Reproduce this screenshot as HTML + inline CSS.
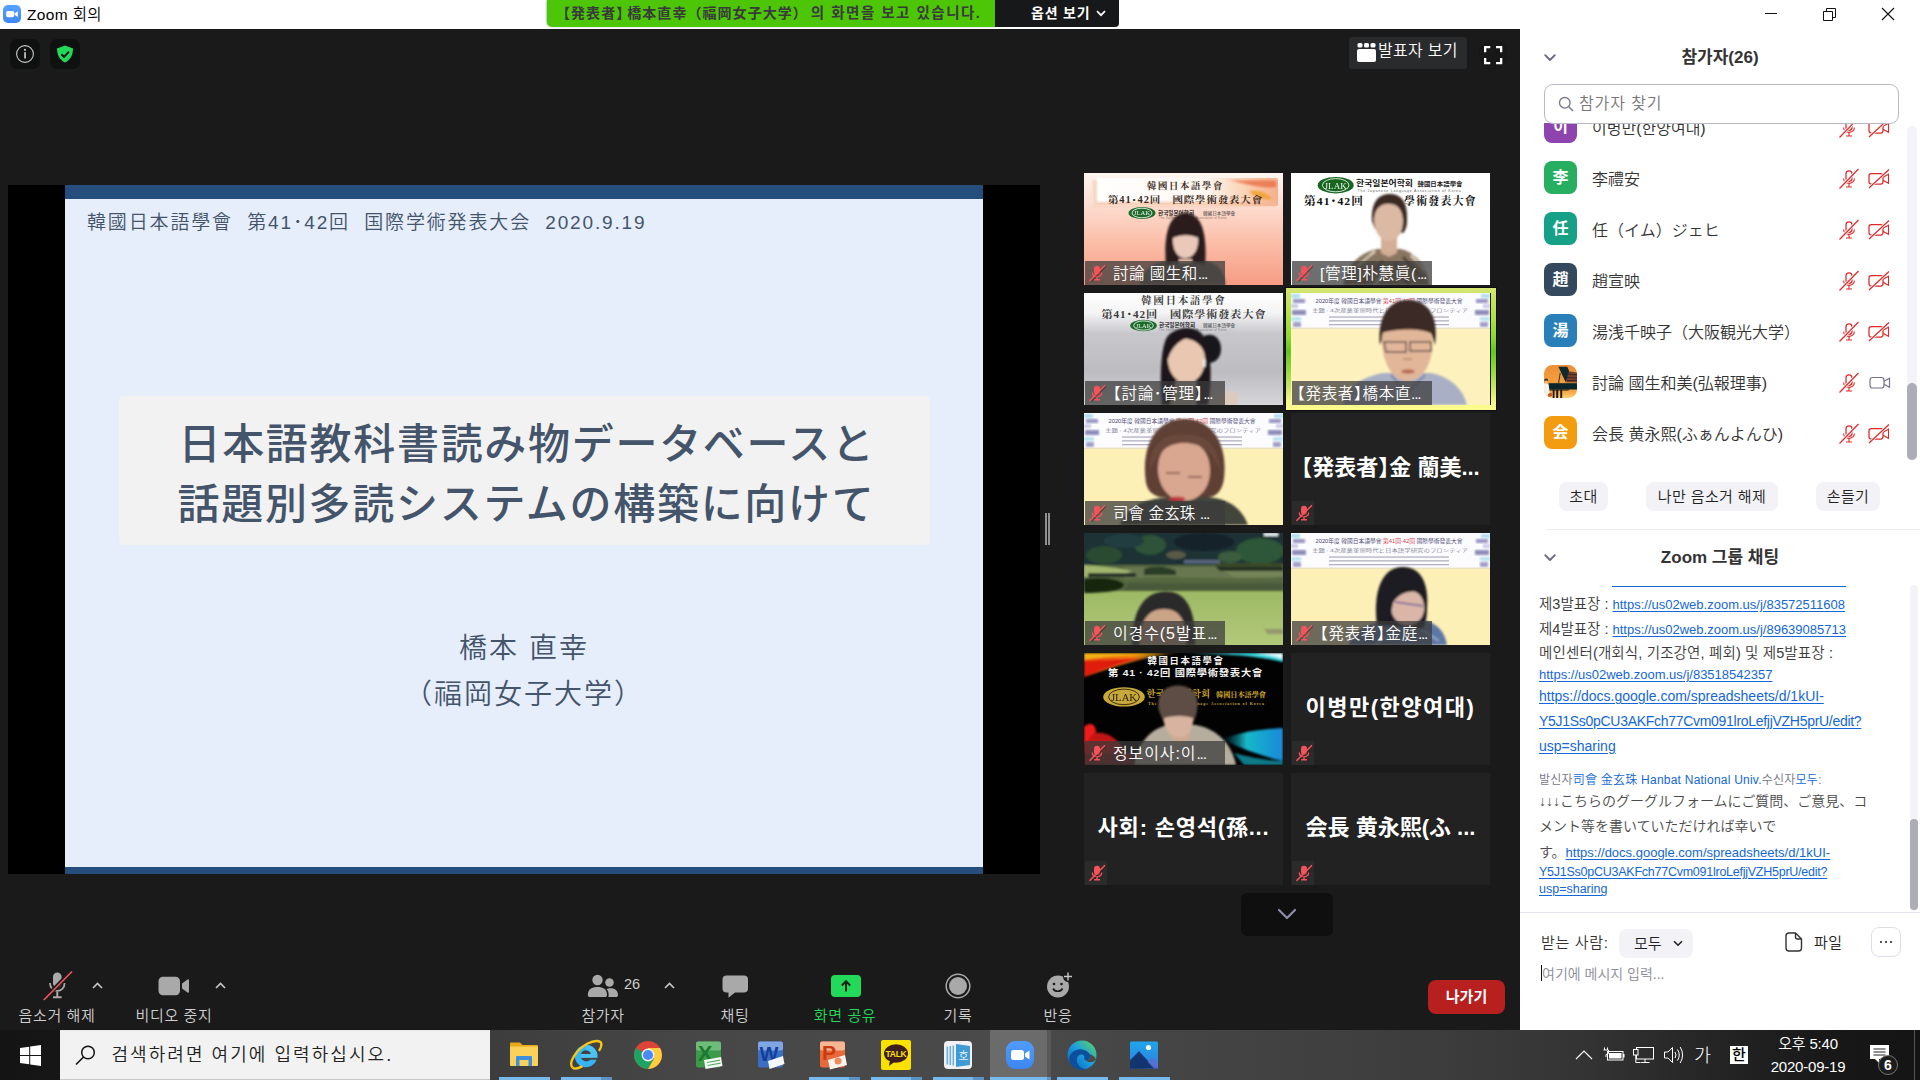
<!DOCTYPE html>
<html lang="ko">
<head>
<meta charset="utf-8">
<title>Zoom 회의</title>
<style>
*{box-sizing:border-box;margin:0;padding:0}
html,body{width:1920px;height:1080px;overflow:hidden;background:#1a1a1a}
body{font-family:"Liberation Sans","Noto Sans CJK KR","Noto Sans CJK JP",sans-serif;position:relative;color:#fff;font-weight:350}
.abs{position:absolute}
.nw{white-space:nowrap}
svg{display:block;overflow:visible}
/* title bar */
#titlebar{position:absolute;left:0;top:0;width:1920px;height:29px;background:#fff}
#titlebar .ttl{position:absolute;left:27px;top:0;height:29px;line-height:30px;font-size:15.500px;color:#000;white-space:nowrap;letter-spacing:.35px}
/* main */
#main{position:absolute;left:0;top:29px;width:1520px;height:1001px;background:#1a1a1a;overflow:hidden}
/* banner */
#banner{position:absolute;left:547px;top:0;width:448px;height:27px;background:#4cc606;border-radius:0 0 0 5px;color:#3a3a3c;font-weight:bold;font-size:14.500px;line-height:27px;white-space:nowrap;text-align:left;padding-left:16px;letter-spacing:1.500px;box-shadow:-1px 0 2px rgba(0,0,0,.25)}
#banner .bj{font-feature-settings:'halt';letter-spacing:1.050px;font-size:14px}
#banner .bk{letter-spacing:1.050px;font-size:14px;margin-right:3px;margin-left:3px}
#opt{position:absolute;left:995px;top:0;width:124px;height:27px;background:#17181a;border-radius:0 0 4px 0;color:#fff;font-weight:bold;font-size:14px;line-height:26px;white-space:nowrap}
/* slide */
#share{position:absolute;left:8px;top:185px;width:1032px;height:689px;background:#000}
#slide{position:absolute;left:57px;top:0;width:918px;height:689px;background:#e6eefc;font-family:"Liberation Sans","Noto Sans CJK JP",sans-serif;color:#44546a}
#slide .bar{position:absolute;left:0;width:918px;background:#254e7c}
/* panel */
#panel{position:absolute;left:1520px;top:29px;width:400px;height:1001px;background:#fff;color:#333;overflow:hidden}
/* taskbar */
#taskbar{position:absolute;left:0;top:1030px;width:1920px;height:50px;background:linear-gradient(90deg,#141414 0%,#1c1c1c 20%,#444 32%,#4a4a4a 50%,#444 62%,#2a2a2a 75%,#161616 90%,#141414 100%)}
</style>
</head>
<body>
<div id="titlebar">
  <svg class="abs" style="left:3px;top:5px" width="18" height="18" viewBox="0 0 18 18">
    <defs><linearGradient id="zg" x1="0" y1="0" x2="0" y2="1"><stop offset="0" stop-color="#5aa2ff"/><stop offset="1" stop-color="#3c86f2"/></linearGradient></defs>
    <rect x="0" y="0" width="18" height="18" rx="5" fill="url(#zg)"/>
    <rect x="3.2" y="6" width="8" height="6.2" rx="1.6" fill="#fff"/>
    <path d="M11.8 8.2 L14.8 6.3 V11.9 L11.8 10 Z" fill="#fff"/>
  </svg>
  <div class="ttl">Zoom 회의</div>
  <svg class="abs" style="left:1764px;top:6px" width="140" height="18" viewBox="0 0 140 18">
    <path d="M1 7.5 H13" stroke="#111" stroke-width="1" fill="none"/>
    <path d="M59.5 5.5 H68.5 V14.5 H59.5 Z M62.5 5.5 V2.5 H71.5 V11.5 H68.5" stroke="#111" stroke-width="1" fill="none"/>
    <path d="M118 2 L130 14 M130 2 L118 14" stroke="#111" stroke-width="1.1" fill="none"/>
  </svg>
</div>
<div id="main">
  <!-- info + shield buttons -->
  <div class="abs" style="left:10px;top:10px;width:30px;height:30px;border-radius:7px;background:#0f1010"></div>
  <svg class="abs" style="left:10px;top:10px" width="30" height="30" viewBox="0 0 30 30">
    <circle cx="15" cy="15" r="8.4" fill="none" stroke="#c8c8c8" stroke-width="1.1"/>
    <rect x="14.2" y="13.2" width="1.7" height="6.3" fill="#c8c8c8"/>
    <circle cx="15" cy="10.8" r="1.1" fill="#c8c8c8"/>
  </svg>
  <div class="abs" style="left:50px;top:10px;width:30px;height:30px;border-radius:7px;background:#0f1010"></div>
  <svg class="abs" style="left:50px;top:10px" width="30" height="30" viewBox="0 0 30 30">
    <path d="M15 6.4 L23 9.6 C23 16 20.5 21 15 23.6 C9.500 21 7 16 7 9.6 Z" fill="#23d959"/>
    <path d="M11.400 15.3 L14 17.800 L19 12.600" fill="none" stroke="#0f1010" stroke-width="1.900"/>
  </svg>

  <!-- speaker view button -->
  <div class="abs" style="left:1349px;top:8px;width:118px;height:32px;border-radius:3px;background:#2a2b2d"></div>
  <svg class="abs" style="left:1357px;top:14px" width="19" height="19" viewBox="0 0 19 19">
    <rect x="0" y="6" width="19" height="13" rx="2" fill="#fff"/>
    <rect x="0.5" y="0" width="5" height="4.6" rx="1.6" fill="#fff"/>
    <rect x="7" y="0" width="5" height="4.6" rx="1.6" fill="#fff"/>
    <rect x="13.5" y="0" width="5" height="4.6" rx="1.6" fill="#fff"/>
  </svg>
  <div class="abs nw" style="left:1378px;top:10px;font-size:16px;line-height:24px;color:#fff;letter-spacing:0.3px">발표자 보기</div>
  <div class="abs" style="left:1479px;top:11px;width:29px;height:29px;border-radius:15px;background:#171717"></div>
  <svg class="abs" style="left:1484px;top:16.500px" width="18.300" height="18.300" viewBox="0 0 19 19">
    <path d="M1.2 6.5 V1.200 H6.5 M12.500 1.200 H17.800 V6.5 M17.800 12.500 V17.800 H12.500 M6.5 17.800 H1.200 V12.500" fill="none" stroke="#fff" stroke-width="2.400"/>
  </svg>

  <!-- shared screen -->
  <div id="share" style="top:156px">
    <div id="slide">
      <div class="bar" style="top:0;height:14px"></div>
      <div class="bar" style="top:682px;height:7px"></div>
      <div class="abs nw" style="left:22px;top:23px;font-size:19px;line-height:30px;letter-spacing:1.850px;color:#44546a">韓國日本語學會&nbsp; 第41･42回&nbsp; 国際学術発表大会&nbsp; 2020.9.19</div>
      <div class="abs" style="left:54px;top:211px;width:811px;height:149px;border-radius:5px;background:#f2f2f2"></div>
      <div class="abs nw" style="left:56px;top:229.500px;width:811px;text-align:center;font-size:42px;line-height:60px;letter-spacing:1.700px;font-weight:500;color:#44546a;text-indent:1px">日本語教科書読み物データベースと</div>
      <div class="abs nw" style="left:56px;top:289.500px;width:811px;text-align:center;font-size:42px;line-height:60px;letter-spacing:1.700px;font-weight:500;color:#44546a">話題別多読システムの構築に向けて</div>
      <div class="abs nw" style="left:0;top:442px;width:918px;text-align:center;font-size:28px;line-height:44px;letter-spacing:2px;color:#44546a">橋本 直幸</div>
      <div class="abs nw" style="left:0;top:487.500px;width:918px;text-align:center;font-size:28px;line-height:44px;letter-spacing:2px;color:#44546a">（福岡女子大学）</div>
    </div>
  </div>
  <!-- splitter handle -->
  <div class="abs" style="left:1045px;top:484px;width:2px;height:32px;background:#8f8f8f"></div>
  <div class="abs" style="left:1048px;top:484px;width:2px;height:32px;background:#8f8f8f"></div>
<style>
.tile{position:absolute;width:199px;height:112px;overflow:hidden;background:#222}
.tile>svg{position:absolute;left:0;top:0}
.lb{position:absolute;left:1px;top:88px;width:140px;height:24px;background:rgba(59,59,59,.74)}
.lt{position:absolute;top:88px;height:24px;line-height:25px;font-size:15.500px;color:#fff;white-space:nowrap;font-feature-settings:'halt'}
.dt{letter-spacing:-1.200px;font-size:15.500px}
.nv{position:absolute;left:0;top:0;width:199px;height:112px;line-height:110px;text-align:center;font-size:22px;font-weight:bold;color:#fff;white-space:nowrap;font-feature-settings:'halt'}
.nm{position:absolute;left:1px;top:88px;width:22px;height:24px;background:#2b2b2b}
</style>
<svg width="0" height="0" style="position:absolute"><defs><filter id="sf" x="-10%" y="-10%" width="120%" height="120%"><feGaussianBlur stdDeviation="0.8"/></filter></defs></svg>
<div class="abs" style="left:1286px;top:259px;width:210px;height:122px;box-shadow:0 0 0 1px #0c0c12;background:linear-gradient(180deg,#d6e674 0%,#cde466 5%,#b9e24a 20%,#8fd92f 40%,#62c61a 52%,#96db3a 68%,#d4e96c 84%,#f6f886 93%,#fcfc90 100%)"></div>
<div class="abs" style="left:1490px;top:264px;width:1px;height:112px;background:#1c1c20"></div>
<div class="tile" style="left:1084px;top:144px"><svg width="199" height="112" viewBox="0 0 199 112"><defs><linearGradient id="g1" x1="0" y1="0" x2="0" y2="1"><stop offset="0" stop-color="#fff6f2"/><stop offset="0.3" stop-color="#fddccf"/><stop offset="0.65" stop-color="#fbbba5"/><stop offset="1" stop-color="#f79c83"/></linearGradient><linearGradient id="g1b" x1="0" y1="0" x2="1" y2="0"><stop offset="0" stop-color="#ffffff"/><stop offset="0.6" stop-color="#fff8f2"/><stop offset="0.82" stop-color="#fbd3b6"/><stop offset="1" stop-color="#f4b08c"/></linearGradient></defs><rect width="199" height="112" fill="url(#g1)"/><rect x="8" y="5" width="186" height="28" rx="2" fill="url(#g1b)"/><g filter="url(#sf)"><path d="M12 29 H192 V33 H12Z" fill="#f4b896" opacity="0.7"/><path d="M140 6 C155 9 170 6 192 8 V14 C175 16 160 10 140 6Z" fill="#e8623a" opacity="0.7"/><path d="M165 18 C175 16 184 20 188 26 C178 28 170 24 165 18Z" fill="#f0a030" opacity="0.850"/><rect x="8" y="6" width="5" height="30" rx="2" fill="#f6d8c4"/></g><text textLength="77" lengthAdjust="spacingAndGlyphs" x="101.500" y="16.200" text-anchor="middle" font-size="9.300" font-weight="bold" letter-spacing="1.700" font-family="Liberation Serif,Noto Serif CJK KR,Noto Serif CJK SC,serif" fill="#3b2a22">韓國日本語學會</text><text textLength="155" lengthAdjust="spacingAndGlyphs" x="101.500" y="30.300" text-anchor="middle" font-size="9.600" font-weight="bold" letter-spacing="0.800" font-family="Liberation Serif,Noto Serif CJK KR,Noto Serif CJK SC,serif" fill="#3b2a22">第41･42回　國際學術發表大會</text><ellipse cx="58" cy="40" rx="13.5" ry="6" fill="#1e6a2a"/><ellipse cx="58" cy="40" rx="10.0" ry="4.8" fill="none" stroke="#fff" stroke-width="0.9" opacity="0.9"/><text x="58" y="42.4" text-anchor="middle" font-size="6.6" font-family="Liberation Serif,Noto Serif CJK KR,Noto Serif CJK SC,serif" fill="#fff" opacity="0.95">JLAK</text><text x="74" y="41.500" font-size="5.600" font-weight="bold" font-family="Liberation Sans,Noto Sans CJK KR,sans-serif" fill="#222">한국일본어학회</text><text x="119" y="41.500" font-size="4.600" font-family="Liberation Sans,Noto Sans CJK KR,sans-serif" fill="#333">韓國日本語學會</text><text x="75" y="45.800" font-size="2.600" letter-spacing="0.350" font-family="Liberation Sans,Noto Sans CJK KR,sans-serif" fill="#8a6a60">The Japanese Language Association of Korea</text><g filter="url(#sf)"><path d="M56 112 C58 96 70 89 84 88 H120 C132 89 140 96 142 112Z" fill="#6f665a"/><path d="M82 92 C80 70 82 40 101.500 40 C121 40 123 70 121 92 L112 90 H90Z" fill="#2a1c1c"/><path d="M89 64 C92 60 110 60 114 64 C115 76 110 85 101 85 C93 85 88 76 89 64Z" fill="#ebc9ba"/><path d="M88 66 C92 56 110 56 115 66 C110 61 94 61 88 66Z" fill="#2a1c1c"/><path d="M95 86 H108 V90 H95Z" fill="#e2bba9"/></g></svg><div class="lb"></div><svg class="abs" style="left:4px;top:91px" width="18" height="18" viewBox="0 0 18 18"><rect x="6" y="1.800" width="6" height="9.200" rx="3" fill="#f5535a"/><path d="M4.300 8.600 C4.300 14 13.700 14 13.700 8.600" fill="none" stroke="#f5535a" stroke-width="1.300"/><path d="M9 12.800 V15.300 M6 15.700 H12" stroke="#f5535a" stroke-width="1.500" fill="none"/><path d="M17.800 2.200 L3.500 17.600" stroke="#2a2424" stroke-width="1.300" fill="none" opacity="0.450"/><path d="M17 1.200 L1.500 16.800" stroke="#f5535a" stroke-width="1.500" fill="none"/></svg><div class="lt" style="left:29px;letter-spacing:0.5px">討論 國生和<span class="dt">...</span></div></div>
<div class="tile" style="left:1291px;top:144px"><svg width="199" height="112" viewBox="0 0 199 112"><rect width="199" height="112" fill="#fff"/><ellipse cx="44.7" cy="12.2" rx="18" ry="8.3" fill="#17651f"/><ellipse cx="44.7" cy="12.2" rx="13.3" ry="6.6" fill="none" stroke="#fff" stroke-width="0.9" opacity="0.9"/><text x="44.7" y="15.5" text-anchor="middle" font-size="9.1" font-family="Liberation Serif,Noto Serif CJK KR,Noto Serif CJK SC,serif" fill="#fff" opacity="0.95">JLAK</text><text textLength="57" lengthAdjust="spacingAndGlyphs" x="65" y="13" font-size="7.900" font-weight="bold" font-family="Liberation Sans,Noto Sans CJK KR,sans-serif" fill="#111">한국일본어학회</text><text textLength="45" lengthAdjust="spacingAndGlyphs" x="126.500" y="12.500" font-size="6.200" font-weight="bold" font-family="Liberation Sans,Noto Sans CJK KR,sans-serif" fill="#222">韓國日本語學會</text><text textLength="104" lengthAdjust="spacingAndGlyphs" x="66.500" y="19.300" font-size="3.600" letter-spacing="0.720" font-family="Liberation Sans,Noto Sans CJK KR,sans-serif" fill="#666">The Japanese Language Association of Korea</text><text textLength="60" lengthAdjust="spacingAndGlyphs" x="13" y="32.300" font-size="11" font-weight="bold" letter-spacing="1" font-family="Liberation Serif,Noto Serif CJK KR,Noto Serif CJK SC,serif" fill="#111">第41･42回</text><text textLength="73" lengthAdjust="spacingAndGlyphs" x="113" y="32.300" font-size="11" font-weight="bold" letter-spacing="1.300" font-family="Liberation Serif,Noto Serif CJK KR,Noto Serif CJK SC,serif" fill="#111">學術發表大會</text><g filter="url(#sf)"><path d="M52 112 C56 92 68 80 86 76 H110 C126 80 136 94 138 112Z" fill="#8a7560"/><path d="M60 100 L80 82 M72 110 L92 88 M112 84 L130 104 M104 90 L118 112" stroke="#2e2622" stroke-width="3.200" opacity="0.6"/><path d="M66 94 L84 78 M120 82 L134 98 M84 112 L96 96" stroke="#efe4cc" stroke-width="3" opacity="0.750"/><path d="M90 60 H106 V80 L98 84 L90 80Z" fill="#d3ad96"/><path d="M81 48 C80 28 88 21 99 21 C111 21 117 30 116 48 C116 54 114 58 112 60 L84 56Z" fill="#3b2a24"/><path d="M83 46 C84 34 92 30 99 31 C107 31 112 38 112 48 C112 60 106 68 98 68 C90 68 83 60 83 46Z" fill="#dcb9a3"/></g></svg><div class="lb"></div><svg class="abs" style="left:4px;top:91px" width="18" height="18" viewBox="0 0 18 18"><rect x="6" y="1.800" width="6" height="9.200" rx="3" fill="#f5535a"/><path d="M4.300 8.600 C4.300 14 13.700 14 13.700 8.600" fill="none" stroke="#f5535a" stroke-width="1.300"/><path d="M9 12.800 V15.300 M6 15.700 H12" stroke="#f5535a" stroke-width="1.500" fill="none"/><path d="M17.800 2.200 L3.500 17.600" stroke="#2a2424" stroke-width="1.300" fill="none" opacity="0.450"/><path d="M17 1.200 L1.500 16.800" stroke="#f5535a" stroke-width="1.500" fill="none"/></svg><div class="lt" style="left:29px;letter-spacing:0.7px">[管理]朴慧眞(<span class="dt">...</span></div></div>
<div class="tile" style="left:1084px;top:264px"><svg width="199" height="112" viewBox="0 0 199 112"><defs><linearGradient id="g3" x1="0" y1="0" x2="0" y2="1"><stop offset="0" stop-color="#ffffff"/><stop offset="0.18" stop-color="#f4f4f5"/><stop offset="0.36" stop-color="#c8c7cc"/><stop offset="0.7" stop-color="#bdbcc1"/><stop offset="1" stop-color="#d6d5d8"/></linearGradient></defs><rect width="199" height="112" fill="url(#g3)"/><text textLength="85.5" lengthAdjust="spacingAndGlyphs" x="100" y="11.300" text-anchor="middle" font-size="10.200" font-weight="bold" letter-spacing="2" font-family="Liberation Serif,Noto Serif CJK KR,Noto Serif CJK SC,serif" fill="#3a3a3a">韓國日本語學會</text><text textLength="165" lengthAdjust="spacingAndGlyphs" x="100" y="25.200" text-anchor="middle" font-size="10.200" font-weight="bold" letter-spacing="0.850" font-family="Liberation Serif,Noto Serif CJK KR,Noto Serif CJK SC,serif" fill="#3a3a3a">第41･42回　國際學術發表大會</text><ellipse cx="59.5" cy="32.5" rx="13.3" ry="5.8" fill="#1b6b28"/><ellipse cx="59.5" cy="32.5" rx="9.8" ry="4.6" fill="none" stroke="#fff" stroke-width="0.9" opacity="0.9"/><text x="59.5" y="34.8" text-anchor="middle" font-size="6.4" font-family="Liberation Serif,Noto Serif CJK KR,Noto Serif CJK SC,serif" fill="#fff" opacity="0.95">JLAK</text><text x="75" y="34" font-size="5.600" font-weight="bold" font-family="Liberation Sans,Noto Sans CJK KR,sans-serif" fill="#222">한국일본어학회</text><text x="119" y="34" font-size="4.600" font-family="Liberation Sans,Noto Sans CJK KR,sans-serif" fill="#333">韓國日本語學會</text><text x="75" y="38.300" font-size="2.600" letter-spacing="0.350" font-family="Liberation Sans,Noto Sans CJK KR,sans-serif" fill="#777">The Japanese Language Association of Korea</text><g filter="url(#sf)"><path d="M118 44 C128 38 137 44 137 56 C137 64 132 70 124 70Z" fill="#17161a"/><path d="M128 112 C130 100 140 96 154 100 V112Z" fill="#dccbbd"/><path d="M78 112 C76 90 76 60 82 46 C88 34 112 30 120 44 C128 58 128 90 124 112Z" fill="#1b181a"/><path d="M84 60 C86 48 96 44 104 46 C114 48 122 56 121 68 C120 82 112 90 102 90 C92 90 82 78 84 60Z" fill="#e9c7b0"/><path d="M82 62 C84 46 96 40 106 44 C98 46 88 52 84 66Z" fill="#1b181a"/><path d="M92 88 H112 V112 H86Z" fill="#c9b9aa"/><rect x="119" y="66" width="2.500" height="8" rx="1.200" fill="#f4f4f4"/></g></svg><div class="lb"></div><svg class="abs" style="left:4px;top:91px" width="18" height="18" viewBox="0 0 18 18"><rect x="6" y="1.800" width="6" height="9.200" rx="3" fill="#f5535a"/><path d="M4.300 8.600 C4.300 14 13.700 14 13.700 8.600" fill="none" stroke="#f5535a" stroke-width="1.300"/><path d="M9 12.800 V15.300 M6 15.700 H12" stroke="#f5535a" stroke-width="1.500" fill="none"/><path d="M17.800 2.200 L3.500 17.600" stroke="#2a2424" stroke-width="1.300" fill="none" opacity="0.450"/><path d="M17 1.200 L1.500 16.800" stroke="#f5535a" stroke-width="1.500" fill="none"/></svg><div class="lt" style="left:29px;letter-spacing:0.7px">【討論･管理】<span class="dt">...</span></div></div>
<div class="tile" style="left:1291px;top:264px"><svg width="199" height="112" viewBox="0 0 199 112"><rect width="199" height="112" fill="#fdf2bd"/><rect x="0" y="0" width="199" height="35" fill="#fcfcff"/><rect x="0" y="1" width="9" height="4" fill="#8fd0e8" opacity="0.7" filter="url(#sf)"/><rect x="2" y="6" width="12" height="4" fill="#6d6aa8" opacity="0.7" filter="url(#sf)"/><rect x="0" y="11" width="7" height="4" fill="#b7b4dc" opacity="0.7" filter="url(#sf)"/><rect x="1" y="17" width="14" height="5" fill="#5f5c9c" opacity="0.7" filter="url(#sf)"/><rect x="0" y="24" width="10" height="4" fill="#9ad7ea" opacity="0.7" filter="url(#sf)"/><rect x="2" y="29" width="8" height="5" fill="#7a77b3" opacity="0.7" filter="url(#sf)"/><rect x="190" y="1" width="9" height="4" fill="#8fd0e8" opacity="0.7" filter="url(#sf)"/><rect x="185" y="6" width="12" height="4" fill="#6d6aa8" opacity="0.7" filter="url(#sf)"/><rect x="192" y="11" width="7" height="4" fill="#b7b4dc" opacity="0.7" filter="url(#sf)"/><rect x="184" y="17" width="14" height="5" fill="#5f5c9c" opacity="0.7" filter="url(#sf)"/><rect x="189" y="24" width="10" height="4" fill="#9ad7ea" opacity="0.7" filter="url(#sf)"/><rect x="189" y="29" width="8" height="5" fill="#7a77b3" opacity="0.7" filter="url(#sf)"/><text x="24.500" y="10.300" textLength="147" lengthAdjust="spacingAndGlyphs" font-size="6.200" font-family="Liberation Sans,Noto Sans CJK KR,sans-serif" fill="#4a4670">2020年度 韓國日本語學會 <tspan fill="#d23a4a">第41回·42回</tspan> 國際學術發表大會</text><text x="21" y="18.600" textLength="156" lengthAdjust="spacingAndGlyphs" font-size="4.300" font-family="Liberation Sans,Noto Sans CJK KR,sans-serif" fill="#7a798e">主題 : 4次産業革命時代と日本語学研究のフロンティア</text><rect x="38" y="23.4" width="120" height="1.300" fill="#9a99ac" opacity="0.750"/><rect x="38" y="27.2" width="120" height="1.300" fill="#9a99ac" opacity="0.750"/><rect x="38" y="31" width="120" height="1.300" fill="#9a99ac" opacity="0.750"/><rect x="0" y="34.500" width="199" height="1.500" fill="#e8e0c8" opacity="0.9"/><g filter="url(#sf)"><path d="M52 112 C56 94 70 84 92 80 H140 C160 84 172 96 176 112Z" fill="#a9b0c6"/><path d="M100 82 L116 100 L134 82" fill="none" stroke="#8088a4" stroke-width="2"/><path d="M89 52 C86 24 98 6 118 7 C138 8 148 24 144 52 L140 40 H94Z" fill="#3a2c26"/><path d="M91 44 C92 34 100 30 116 30 C132 30 140 36 141 46 C143 66 134 88 116 88 C100 88 90 66 91 44Z" fill="#e2b699"/><path d="M90 40 C96 28 110 30 118 26 C128 28 138 30 143 42 C132 34 104 36 90 40Z" fill="#3a2c26"/><path d="M93 49 H115 V59 H95Z M119 49 H140 V58 H119Z" fill="none" stroke="#4a4040" stroke-width="1.400" opacity="0.850"/><ellipse cx="117" cy="78.500" rx="7" ry="2.200" fill="#b0604e" opacity="0.850"/><path d="M112 66 H121" stroke="#b88a70" stroke-width="1.500"/></g></svg><div class="lb"></div><div class="lt" style="left:6px;letter-spacing:0.7px">【発表者】橋本直<span class="dt">...</span></div></div>
<div class="tile" style="left:1084px;top:384px"><svg width="199" height="112" viewBox="0 0 199 112"><rect width="199" height="112" fill="#fdf0b6"/><rect x="0" y="0" width="199" height="35" fill="#fcfcff"/><rect x="0" y="1" width="9" height="4" fill="#8fd0e8" opacity="0.7" filter="url(#sf)"/><rect x="2" y="6" width="12" height="4" fill="#6d6aa8" opacity="0.7" filter="url(#sf)"/><rect x="0" y="11" width="7" height="4" fill="#b7b4dc" opacity="0.7" filter="url(#sf)"/><rect x="1" y="17" width="14" height="5" fill="#5f5c9c" opacity="0.7" filter="url(#sf)"/><rect x="0" y="24" width="10" height="4" fill="#9ad7ea" opacity="0.7" filter="url(#sf)"/><rect x="2" y="29" width="8" height="5" fill="#7a77b3" opacity="0.7" filter="url(#sf)"/><rect x="190" y="1" width="9" height="4" fill="#8fd0e8" opacity="0.7" filter="url(#sf)"/><rect x="185" y="6" width="12" height="4" fill="#6d6aa8" opacity="0.7" filter="url(#sf)"/><rect x="192" y="11" width="7" height="4" fill="#b7b4dc" opacity="0.7" filter="url(#sf)"/><rect x="184" y="17" width="14" height="5" fill="#5f5c9c" opacity="0.7" filter="url(#sf)"/><rect x="189" y="24" width="10" height="4" fill="#9ad7ea" opacity="0.7" filter="url(#sf)"/><rect x="189" y="29" width="8" height="5" fill="#7a77b3" opacity="0.7" filter="url(#sf)"/><text x="24.500" y="10.300" textLength="147" lengthAdjust="spacingAndGlyphs" font-size="6.200" font-family="Liberation Sans,Noto Sans CJK KR,sans-serif" fill="#4a4670">2020年度 韓國日本語學會 <tspan fill="#d23a4a">第41回·42回</tspan> 國際學術發表大會</text><text x="21" y="18.600" textLength="156" lengthAdjust="spacingAndGlyphs" font-size="4.300" font-family="Liberation Sans,Noto Sans CJK KR,sans-serif" fill="#7a798e">主題 : 4次産業革命時代と日本語学研究のフロンティア</text><rect x="38" y="23.4" width="120" height="1.300" fill="#9a99ac" opacity="0.750"/><rect x="38" y="27.2" width="120" height="1.300" fill="#9a99ac" opacity="0.750"/><rect x="38" y="31" width="120" height="1.300" fill="#9a99ac" opacity="0.750"/><rect x="0" y="34.500" width="199" height="1.500" fill="#e8e0c8" opacity="0.9"/><g filter="url(#sf)"><path d="M36 112 C42 94 60 86 84 84 H124 C146 86 158 96 164 112Z" fill="#43453a"/><path d="M62 70 C56 30 74 6 100 6 C128 6 144 30 140 66 C138 78 132 84 124 84 L76 84 C68 82 64 78 62 70Z" fill="#5f4036"/><path d="M74 56 C74 38 84 28 100 28 C116 28 126 40 126 58 C126 76 114 88 100 88 C86 88 74 74 74 56Z" fill="#d9a68f"/><path d="M66 58 C64 30 84 18 102 22 C120 20 136 34 136 58 C130 40 118 30 100 30 C84 30 72 40 66 58Z" fill="#6a483c"/><ellipse cx="93" cy="86" rx="8.500" ry="2.600" fill="#c0303a" opacity="0.9"/><path d="M82 60 H96 M104 64 H118" stroke="#5a3a30" stroke-width="1.300" opacity="0.7"/></g></svg><div class="lb"></div><svg class="abs" style="left:4px;top:91px" width="18" height="18" viewBox="0 0 18 18"><rect x="6" y="1.800" width="6" height="9.200" rx="3" fill="#f5535a"/><path d="M4.300 8.600 C4.300 14 13.700 14 13.700 8.600" fill="none" stroke="#f5535a" stroke-width="1.300"/><path d="M9 12.800 V15.300 M6 15.700 H12" stroke="#f5535a" stroke-width="1.500" fill="none"/><path d="M17.800 2.200 L3.500 17.600" stroke="#2a2424" stroke-width="1.300" fill="none" opacity="0.450"/><path d="M17 1.200 L1.500 16.800" stroke="#f5535a" stroke-width="1.500" fill="none"/></svg><div class="lt" style="left:29px;letter-spacing:0.1px">司會 金玄珠 <span class="dt">...</span></div></div>
<div class="tile" style="left:1291px;top:384px"><div class="nv">【発表者】金 蘭美...</div><div class="nm"></div><svg class="abs" style="left:4px;top:91px" width="18" height="18" viewBox="0 0 18 18"><rect x="6" y="1.800" width="6" height="9.200" rx="3" fill="#f5535a"/><path d="M4.300 8.600 C4.300 14 13.700 14 13.700 8.600" fill="none" stroke="#f5535a" stroke-width="1.300"/><path d="M9 12.800 V15.300 M6 15.700 H12" stroke="#f5535a" stroke-width="1.500" fill="none"/><path d="M17.800 2.200 L3.500 17.600" stroke="#2a2424" stroke-width="1.300" fill="none" opacity="0.450"/><path d="M17 1.200 L1.500 16.800" stroke="#f5535a" stroke-width="1.500" fill="none"/></svg></div>
<div class="tile" style="left:1084px;top:504px"><svg width="199" height="112" viewBox="0 0 199 112"><defs><linearGradient id="g7" x1="0" y1="0" x2="0" y2="1"><stop offset="0.5" stop-color="#9db964"/><stop offset="1" stop-color="#b2c87a"/></linearGradient></defs><rect width="199" height="112" fill="url(#g7)"/><g filter="url(#sf)"><rect x="-3" y="-3" width="205" height="37" fill="#1b3036"/><ellipse cx="20" cy="22" rx="18" ry="9" fill="#2c4c30"/><ellipse cx="66" cy="12" rx="16" ry="10" fill="#2f5238"/><ellipse cx="40" cy="8" rx="20" ry="7" fill="#223c40"/><ellipse cx="176" cy="18" rx="24" ry="13" fill="#2f5637"/><ellipse cx="120" cy="9" rx="30" ry="9" fill="#13242c"/><ellipse cx="146" cy="24" rx="12" ry="6" fill="#3a5c3c"/><ellipse cx="92" cy="22" rx="10" ry="4" fill="#5a5a48"/><rect x="180" y="0" width="14" height="3" fill="#e8f0f4"/><rect x="-3" y="32" width="205" height="26" fill="#55673f"/><path d="M40 34 H199 V44 C150 48 100 42 40 46Z" fill="#6c7c54" opacity="0.8"/><path d="M44 50 H199 V58 H40Z" fill="#47583a" opacity="0.850"/><path d="M140 38 H199 V44 H150Z" fill="#7d8c5e" opacity="0.7"/><path d="M0 32 C15 33 35 35 48 38 C40 42 20 44 0 44Z" fill="#a2b66e"/><path d="M0 46 C20 43 40 47 40 52 C40 58 20 60 0 60Z" fill="#182810"/><path d="M4 40 H52 V44 H4Z" fill="#26322a"/><path d="M60 36 C70 32 86 34 92 38 V42 H60Z" fill="#2a3c26"/><rect x="132" y="30" width="66" height="5" fill="#3a4a2c"/><rect x="100" y="27" width="36" height="3.500" fill="#5a6880"/><path d="M132 34 H199 V38 H136Z" fill="#222e20"/></g><g filter="url(#sf)"><path d="M48 112 C48 74 62 58.500 82 58.500 C102 58.500 112 76 111 112Z" fill="#2c2c2a"/><path d="M56 112 C55 88 64 76 80 76 C96 76 103 88 102 112Z" fill="#caa487"/><path d="M180 96 H199 V101 H184Z" fill="#8a8468" opacity="0.7"/></g></svg><div class="lb"></div><svg class="abs" style="left:4px;top:91px" width="18" height="18" viewBox="0 0 18 18"><rect x="6" y="1.800" width="6" height="9.200" rx="3" fill="#f5535a"/><path d="M4.300 8.600 C4.300 14 13.700 14 13.700 8.600" fill="none" stroke="#f5535a" stroke-width="1.300"/><path d="M9 12.800 V15.300 M6 15.700 H12" stroke="#f5535a" stroke-width="1.500" fill="none"/><path d="M17.800 2.200 L3.500 17.600" stroke="#2a2424" stroke-width="1.300" fill="none" opacity="0.450"/><path d="M17 1.200 L1.500 16.800" stroke="#f5535a" stroke-width="1.500" fill="none"/></svg><div class="lt" style="left:29px;letter-spacing:0.9px;font-size:16px">이경수(5발표<span class="dt">...</span></div></div>
<div class="tile" style="left:1291px;top:504px"><svg width="199" height="112" viewBox="0 0 199 112"><rect width="199" height="112" fill="#fdf0b6"/><rect x="0" y="0" width="199" height="35" fill="#fcfcff"/><rect x="0" y="1" width="9" height="4" fill="#8fd0e8" opacity="0.7" filter="url(#sf)"/><rect x="2" y="6" width="12" height="4" fill="#6d6aa8" opacity="0.7" filter="url(#sf)"/><rect x="0" y="11" width="7" height="4" fill="#b7b4dc" opacity="0.7" filter="url(#sf)"/><rect x="1" y="17" width="14" height="5" fill="#5f5c9c" opacity="0.7" filter="url(#sf)"/><rect x="0" y="24" width="10" height="4" fill="#9ad7ea" opacity="0.7" filter="url(#sf)"/><rect x="2" y="29" width="8" height="5" fill="#7a77b3" opacity="0.7" filter="url(#sf)"/><rect x="190" y="1" width="9" height="4" fill="#8fd0e8" opacity="0.7" filter="url(#sf)"/><rect x="185" y="6" width="12" height="4" fill="#6d6aa8" opacity="0.7" filter="url(#sf)"/><rect x="192" y="11" width="7" height="4" fill="#b7b4dc" opacity="0.7" filter="url(#sf)"/><rect x="184" y="17" width="14" height="5" fill="#5f5c9c" opacity="0.7" filter="url(#sf)"/><rect x="189" y="24" width="10" height="4" fill="#9ad7ea" opacity="0.7" filter="url(#sf)"/><rect x="189" y="29" width="8" height="5" fill="#7a77b3" opacity="0.7" filter="url(#sf)"/><text x="24.500" y="10.300" textLength="147" lengthAdjust="spacingAndGlyphs" font-size="6.200" font-family="Liberation Sans,Noto Sans CJK KR,sans-serif" fill="#4a4670">2020年度 韓國日本語學會 <tspan fill="#d23a4a">第41回·42回</tspan> 國際學術發表大會</text><text x="21" y="18.600" textLength="156" lengthAdjust="spacingAndGlyphs" font-size="4.300" font-family="Liberation Sans,Noto Sans CJK KR,sans-serif" fill="#7a798e">主題 : 4次産業革命時代と日本語学研究のフロンティア</text><rect x="38" y="23.4" width="120" height="1.300" fill="#9a99ac" opacity="0.750"/><rect x="38" y="27.2" width="120" height="1.300" fill="#9a99ac" opacity="0.750"/><rect x="38" y="31" width="120" height="1.300" fill="#9a99ac" opacity="0.750"/><rect x="0" y="34.500" width="199" height="1.500" fill="#e8e0c8" opacity="0.9"/><g filter="url(#sf)"><path d="M58 112 C62 98 76 90 96 88 H136 C148 92 154 100 156 112Z" fill="#5d78a6"/><path d="M70 104 L90 94 M84 112 L104 98 M130 96 L148 108" stroke="#c8d4e8" stroke-width="1.600" opacity="0.550"/><path d="M86 92 C82 60 90 34 112 34 C132 34 138 54 136 76 C136 86 134 92 132 96Z" fill="#1d1a21"/><path d="M100 68 C102 58 112 56 122 58 C130 60 134 68 133 78 C131 88 124 92 116 92 C106 92 98 82 100 68Z" fill="#dab6a9"/><path d="M96 72 C96 52 112 46 134 60 C124 56 108 58 102 70 L98 90Z" fill="#1d1a21"/><path d="M104 69 L132 73" stroke="#4a3a8a" stroke-width="1.500" opacity="0.750"/></g></svg><div class="lb"></div><svg class="abs" style="left:4px;top:91px" width="18" height="18" viewBox="0 0 18 18"><rect x="6" y="1.800" width="6" height="9.200" rx="3" fill="#f5535a"/><path d="M4.300 8.600 C4.300 14 13.700 14 13.700 8.600" fill="none" stroke="#f5535a" stroke-width="1.300"/><path d="M9 12.800 V15.300 M6 15.700 H12" stroke="#f5535a" stroke-width="1.500" fill="none"/><path d="M17.800 2.200 L3.500 17.600" stroke="#2a2424" stroke-width="1.300" fill="none" opacity="0.450"/><path d="M17 1.200 L1.500 16.800" stroke="#f5535a" stroke-width="1.500" fill="none"/></svg><div class="lt" style="left:29px;letter-spacing:0.7px">【発表者】金庭<span class="dt">...</span></div></div>
<div class="tile" style="left:1084px;top:624px"><svg width="199" height="112" viewBox="0 0 199 112"><defs><linearGradient id="g9a" x1="0" y1="0" x2="1" y2="0.3"><stop offset="0" stop-color="#e01010"/><stop offset="0.5" stop-color="#f58a10"/><stop offset="1" stop-color="#f2c020" stop-opacity="0"/></linearGradient><linearGradient id="g9b" x1="0" y1="0" x2="1" y2="0"><stop offset="0" stop-color="#0a6a80" stop-opacity="0"/><stop offset="0.4" stop-color="#18b8c8"/><stop offset="1" stop-color="#1a8ad8"/></linearGradient></defs><rect width="199" height="112" fill="#020202"/><g filter="url(#sf)"><path d="M0 0 H96 C60 3 30 14 0 24Z" fill="url(#g9a)"/><path d="M0 0 H80 C46 2 20 4 0 7Z" fill="#f0b018"/><path d="M0 9 C20 7 40 5.500 58 5 C36 11 16 17 0 24Z" fill="#e01c10"/><path d="M96 0 H199 V9 C170 2 140 1 96 0Z" fill="#35d8e0"/><path d="M170 0 H199 V6 C190 3 180 1 170 0Z" fill="#e0fcff"/><path d="M138 86 C160 78 180 76 199 75 V108 C180 104 158 96 138 86Z" fill="url(#g9b)"/><path d="M150 100 C165 104 185 108 199 108 V112 H160Z" fill="#0e7a88"/><path d="M0 74 C6 68 12 70 12 80 C22 78 34 86 40 96 L40 112 H0Z" fill="#c01414"/><path d="M0 100 H50 V112 H0Z" fill="#7a1818"/><path d="M0 74 C4 70 10 70 12 78 L0 92Z" fill="#ee1a1a"/></g><text textLength="77" lengthAdjust="spacingAndGlyphs" x="102" y="10.500" text-anchor="middle" font-size="9.300" font-weight="bold" letter-spacing="1.600" font-family="Liberation Sans,Noto Sans CJK KR,sans-serif" fill="#f2f2f2">韓國日本語學會</text><text textLength="155" lengthAdjust="spacingAndGlyphs" x="101.500" y="23.200" text-anchor="middle" font-size="9.500" font-weight="bold" letter-spacing="0.700" font-family="Liberation Sans,Noto Sans CJK KR,sans-serif" fill="#f2f2f2">第 41 · 42回 國際學術發表大會</text><ellipse cx="40" cy="43.9" rx="20.8" ry="9.7" fill="#c8a838"/><ellipse cx="40" cy="43.9" rx="15.4" ry="7.8" fill="none" stroke="#1a1400" stroke-width="0.9" opacity="0.9"/><text x="40" y="47.8" text-anchor="middle" font-size="10.7" font-family="Liberation Serif,Noto Serif CJK KR,Noto Serif CJK SC,serif" fill="#1a1400" opacity="0.95">JLAK</text><text textLength="63.5" lengthAdjust="spacingAndGlyphs" x="62.500" y="44" font-size="8.700" font-weight="bold" font-family="Liberation Serif,Noto Serif CJK KR,Noto Serif CJK SC,serif" fill="#d8b030">한국일본어학회</text><text textLength="50" lengthAdjust="spacingAndGlyphs" x="132" y="43.500" font-size="6.700" font-weight="bold" font-family="Liberation Serif,Noto Serif CJK KR,Noto Serif CJK SC,serif" fill="#d8b030">韓國日本語學會</text><text textLength="117" lengthAdjust="spacingAndGlyphs" x="64" y="51.800" font-size="4" letter-spacing="0.950" font-weight="bold" font-family="Liberation Serif,Noto Serif CJK KR,Noto Serif CJK SC,serif" fill="#c8a838">The Japanese Language Association of Korea</text><g filter="url(#sf)"><path d="M50 112 C54 90 66 76 84 72 H112 C134 76 148 92 152 112Z" fill="#b5ad9e"/><path d="M84 70 H106 V86 L96 92 L86 84Z" fill="#cfa890"/><path d="M75 58 C72 42 80 32.500 94 32.500 C108 32.500 116 42 113 58 C112 64 110 68 108 70 H80Z" fill="#5d4d44"/><path d="M80 64 C82 60 106 60 109 64 C110 76 104 84 95 84 C86 84 79 76 80 64Z" fill="#d8b4a0"/><path d="M78 66 C82 58 90 62 96 56 C102 62 108 60 111 66 C104 62 86 62 78 66Z" fill="#5d4d44"/></g></svg><div class="lb"></div><svg class="abs" style="left:4px;top:91px" width="18" height="18" viewBox="0 0 18 18"><rect x="6" y="1.800" width="6" height="9.200" rx="3" fill="#f5535a"/><path d="M4.300 8.600 C4.300 14 13.700 14 13.700 8.600" fill="none" stroke="#f5535a" stroke-width="1.300"/><path d="M9 12.800 V15.300 M6 15.700 H12" stroke="#f5535a" stroke-width="1.500" fill="none"/><path d="M17.800 2.200 L3.500 17.600" stroke="#2a2424" stroke-width="1.300" fill="none" opacity="0.450"/><path d="M17 1.200 L1.500 16.800" stroke="#f5535a" stroke-width="1.500" fill="none"/></svg><div class="lt" style="left:29px;letter-spacing:0.9px;font-size:16px">정보이사:이<span class="dt">...</span></div></div>
<div class="tile" style="left:1291px;top:624px"><div class="nv"><span style="letter-spacing:1.500px">이병만(한양여대)</span></div><div class="nm"></div><svg class="abs" style="left:4px;top:91px" width="18" height="18" viewBox="0 0 18 18"><rect x="6" y="1.800" width="6" height="9.200" rx="3" fill="#f5535a"/><path d="M4.300 8.600 C4.300 14 13.700 14 13.700 8.600" fill="none" stroke="#f5535a" stroke-width="1.300"/><path d="M9 12.800 V15.300 M6 15.700 H12" stroke="#f5535a" stroke-width="1.500" fill="none"/><path d="M17.800 2.200 L3.500 17.600" stroke="#2a2424" stroke-width="1.300" fill="none" opacity="0.450"/><path d="M17 1.200 L1.500 16.800" stroke="#f5535a" stroke-width="1.500" fill="none"/></svg></div>
<div class="tile" style="left:1084px;top:744px"><div class="nv"><span style="letter-spacing:.8px">사회: 손영석(孫...</span></div><div class="nm"></div><svg class="abs" style="left:4px;top:91px" width="18" height="18" viewBox="0 0 18 18"><rect x="6" y="1.800" width="6" height="9.200" rx="3" fill="#f5535a"/><path d="M4.300 8.600 C4.300 14 13.700 14 13.700 8.600" fill="none" stroke="#f5535a" stroke-width="1.300"/><path d="M9 12.800 V15.300 M6 15.700 H12" stroke="#f5535a" stroke-width="1.500" fill="none"/><path d="M17.800 2.200 L3.500 17.600" stroke="#2a2424" stroke-width="1.300" fill="none" opacity="0.450"/><path d="M17 1.200 L1.500 16.800" stroke="#f5535a" stroke-width="1.500" fill="none"/></svg></div>
<div class="tile" style="left:1291px;top:744px"><div class="nv">会長 黄永熙(ふ ...</div><div class="nm"></div><svg class="abs" style="left:4px;top:91px" width="18" height="18" viewBox="0 0 18 18"><rect x="6" y="1.800" width="6" height="9.200" rx="3" fill="#f5535a"/><path d="M4.300 8.600 C4.300 14 13.700 14 13.700 8.600" fill="none" stroke="#f5535a" stroke-width="1.300"/><path d="M9 12.800 V15.300 M6 15.700 H12" stroke="#f5535a" stroke-width="1.500" fill="none"/><path d="M17.800 2.200 L3.500 17.600" stroke="#2a2424" stroke-width="1.300" fill="none" opacity="0.450"/><path d="M17 1.200 L1.500 16.800" stroke="#f5535a" stroke-width="1.500" fill="none"/></svg></div>
<div class="abs" style="left:1241px;top:864px;width:92px;height:43px;border-radius:6px;background:#0f0f0f"></div>
<svg class="abs" style="left:1277px;top:879px" width="20" height="12" viewBox="0 0 20 12"><path d="M2 2 L10 10 L18 2" fill="none" stroke="#8f8fa9" stroke-width="2.200" stroke-linecap="round" stroke-linejoin="round"/></svg>
<style>
.tbl{position:absolute;top:975.500px;height:22px;line-height:22px;font-size:15px;color:#cfcfcf;white-space:nowrap;text-align:center;letter-spacing:.6px}
.car{position:absolute;top:953px}
</style>
<!-- mute -->
<svg class="abs" style="left:42px;top:941px" width="32" height="32" viewBox="0 0 32 32">
  <rect x="11" y="2.500" width="8.600" height="15" rx="4.300" fill="#a9a9a9"/>
  <path d="M8 13 C8 23.500 22.600 23.500 22.600 13" fill="none" stroke="#a9a9a9" stroke-width="1.800"/>
  <path d="M15.300 21.500 V26.500 M11 27.300 H19.600" stroke="#a9a9a9" stroke-width="2" fill="none"/>
  <path d="M29.500 1.500 L2 29.500" stroke="#1a1a1a" stroke-width="4.500" fill="none"/>
  <path d="M30 1.500 L1.800 30" stroke="#f0555a" stroke-width="1.700" fill="none"/>
</svg>
<svg class="car" style="left:92px" width="11" height="7" viewBox="0 0 11 7"><path d="M1 6 L5.500 1.500 L10 6" fill="none" stroke="#c8c8c8" stroke-width="1.600"/></svg>
<div class="tbl" style="left:0;width:114px">음소거 해제</div>
<!-- video -->
<svg class="abs" style="left:158px;top:947px" width="32" height="20" viewBox="0 0 32 20">
  <rect x="0.500" y="0.800" width="21.500" height="18.400" rx="4.500" fill="#a9a9a9"/>
  <path d="M24 7.500 L29.500 3.500 Q31 2.800 31 4.500 V15.500 Q31 17.200 29.500 16.500 L24 12.500 Z" fill="#a9a9a9"/>
</svg>
<svg class="car" style="left:215px" width="11" height="7" viewBox="0 0 11 7"><path d="M1 6 L5.500 1.500 L10 6" fill="none" stroke="#c8c8c8" stroke-width="1.600"/></svg>
<div class="tbl" style="left:116px;width:116px">비디오 중지</div>
<!-- participants -->
<svg class="abs" style="left:587px;top:945px" width="32" height="24" viewBox="0 0 32 24">
  <circle cx="10.500" cy="6" r="5.200" fill="#a9a9a9"/>
  <path d="M0.800 21 C0.800 15 5 13 10.500 13 C16 13 20 15 20 21 C20 22.500 19 23 18 23 H3 C1.800 23 0.800 22.500 0.800 21Z" fill="#a9a9a9"/>
  <circle cx="22.500" cy="8.500" r="4.300" fill="#a9a9a9"/>
  <path d="M21.500 23 C22 19 21 16.500 19.500 15 C21 14.300 22 14.200 23 14.200 C27.500 14.200 31 16 31 21 C31 22.500 30 23 29 23Z" fill="#a9a9a9"/>
</svg>
<div class="abs nw" style="left:624px;top:943.500px;font-size:14.500px;line-height:22px;color:#d0d0d0">26</div>
<svg class="car" style="left:664px" width="11" height="7" viewBox="0 0 11 7"><path d="M1 6 L5.500 1.500 L10 6" fill="none" stroke="#c8c8c8" stroke-width="1.600"/></svg>
<div class="tbl" style="left:553px;width:100px">참가자</div>
<!-- chat -->
<svg class="abs" style="left:722px;top:946px" width="27" height="24" viewBox="0 0 27 24">
  <path d="M4.500 0.500 H22 Q26 0.500 26 4.500 V13.500 Q26 17.500 22 17.500 H13 L6.500 22.800 V17.500 H4.500 Q0.500 17.500 0.500 13.500 V4.500 Q0.500 0.500 4.500 0.500Z" fill="#a9a9a9"/>
</svg>
<div class="tbl" style="left:685px;width:100px">채팅</div>
<!-- share -->
<div class="abs" style="left:831px;top:946px;width:30px;height:22px;border-radius:4px;background:#23d959"></div>
<svg class="abs" style="left:839px;top:950px" width="14" height="14" viewBox="0 0 14 14"><path d="M7 12.500 V2.500 M2.800 6.500 L7 2.200 L11.200 6.500" fill="none" stroke="#10241a" stroke-width="2"/></svg>
<div class="tbl" style="left:795px;width:100px;color:#23d959">화면 공유</div>
<!-- record -->
<svg class="abs" style="left:945px;top:944px" width="26" height="26" viewBox="0 0 26 26"><circle cx="13" cy="13" r="11.800" fill="none" stroke="#a9a9a9" stroke-width="1.500"/><circle cx="13" cy="13" r="9" fill="#a9a9a9"/></svg>
<div class="tbl" style="left:908px;width:100px">기록</div>
<!-- reactions -->
<svg class="abs" style="left:1046px;top:942px" width="28" height="28" viewBox="0 0 28 28">
  <circle cx="12" cy="15.500" r="11" fill="#a9a9a9"/>
  <circle cx="22.500" cy="5.500" r="5.500" fill="#1a1a1a"/>
  <path d="M22 1.500 V9.500 M18 5.500 H26" stroke="#c8c8c8" stroke-width="1.400" fill="none"/>
  <circle cx="8" cy="13" r="1.300" fill="#1a1a1a"/><circle cx="15.500" cy="13" r="1.300" fill="#1a1a1a"/>
  <path d="M7 17.500 C9 21.200 14.500 21.200 16.500 17.500" fill="none" stroke="#1a1a1a" stroke-width="1.600"/>
</svg>
<div class="tbl" style="left:1008px;width:100px">반응</div>
<!-- leave -->
<div class="abs nw" style="left:1428px;top:951px;width:77px;height:34px;border-radius:8px;background:#b81f1f;color:#fff;font-weight:bold;font-size:15px;line-height:33px;text-align:center">나가기</div>
</div>
<div id="banner"><span class="bj">【発表者】</span><span class="bk">橋本直幸（福岡女子大学）</span>의 화면을 보고 있습니다.</div>
<div id="opt"><span class="abs" style="left:36px;top:0;letter-spacing:.8px">옵션 보기</span>
  <svg class="abs" style="left:101px;top:10px" width="10" height="7" viewBox="0 0 10 7"><path d="M1 1.200 L5 5.200 L9 1.200" fill="none" stroke="#fff" stroke-width="1.700"/></svg>
</div>
<style>
#panel .hd{position:absolute;left:0;width:400px;text-align:center;font-weight:bold;font-size:17px;line-height:24px;color:#333;white-space:nowrap}
#plist{position:absolute;left:0;top:94px;width:400px;height:360px;overflow:hidden}
.av{position:absolute;left:24px;width:33px;height:33px;border-radius:8px;color:#fff;font-weight:bold;font-size:16px;line-height:34px;text-align:center}
.pn{position:absolute;left:72px;height:24px;line-height:23px;font-size:16px;color:#333;white-space:nowrap}
.pb{position:absolute;top:453px;height:29px;border-radius:8px;background:#f2f2f7;color:#222;font-size:15px;line-height:30px;text-align:center;white-space:nowrap;letter-spacing:.4px}
.ch{position:absolute;left:19px;white-space:nowrap;font-size:13px;line-height:20px;color:#3a3a3a}
.ch .k{font-size:14.500px}
.ch .j{color:#4a4a4a}
.ch u,.lk{color:#1467d8;text-decoration:underline;text-underline-offset:2px}
</style>
<div id="panel">
<svg class="abs" style="left:24px;top:25px" width="12" height="8" viewBox="0 0 12 8"><path d="M1.200 1.200 L6 6 L10.800 1.200" fill="none" stroke="#6a6a82" stroke-width="1.900" stroke-linecap="round" stroke-linejoin="round"/></svg>
<div class="hd" style="top:17px">참가자(26)</div>
<div id="plist">
<div class="av" style="top:-13px;background:#8e44ad">이</div>
<div class="pn" style="top:-6px">이병만(한양여대)</div>
<svg class="abs" style="left:318px;top:-6px" width="22" height="22" viewBox="0 0 22 22"><rect x="8" y="2.800" width="6" height="10.500" rx="3" fill="none" stroke="#e02828" stroke-width="1.250"/><path d="M5.600 10.500 C5.600 17 16.400 17 16.400 10.500" fill="none" stroke="#e02828" stroke-width="1.100"/><path d="M11 15.500 V18.500 M8 19 H14" stroke="#e02828" stroke-width="1.100" fill="none"/><path d="M20.500 1 L1.500 20.500" stroke="#fff" stroke-width="3" fill="none"/><path d="M20.500 1 L1.500 20.500" stroke="#e02828" stroke-width="1.200" fill="none"/></svg>
<svg class="abs" style="left:349px;top:-6px;margin-left:-0.700px" width="22" height="22" viewBox="0 0 22 22"><rect x="1" y="5.500" width="14" height="10.500" rx="2.200" fill="none" stroke="#e02828" stroke-width="1.250"/><path d="M15 9.300 L20.500 6.300 V15.300 L15 12.300" fill="none" stroke="#e02828" stroke-width="1.100"/><path d="M21 1.500 L1 20" stroke="#fff" stroke-width="3" fill="none"/><path d="M21 1.500 L1 20" stroke="#e02828" stroke-width="1.200" fill="none"/></svg>
<div class="av" style="top:38px;background:#27ae60">李</div>
<div class="pn" style="top:45px">李禮安</div>
<svg class="abs" style="left:318px;top:45px" width="22" height="22" viewBox="0 0 22 22"><rect x="8" y="2.800" width="6" height="10.500" rx="3" fill="none" stroke="#e02828" stroke-width="1.250"/><path d="M5.600 10.500 C5.600 17 16.400 17 16.400 10.500" fill="none" stroke="#e02828" stroke-width="1.100"/><path d="M11 15.500 V18.500 M8 19 H14" stroke="#e02828" stroke-width="1.100" fill="none"/><path d="M20.500 1 L1.500 20.500" stroke="#fff" stroke-width="3" fill="none"/><path d="M20.500 1 L1.500 20.500" stroke="#e02828" stroke-width="1.200" fill="none"/></svg>
<svg class="abs" style="left:349px;top:45px;margin-left:-0.700px" width="22" height="22" viewBox="0 0 22 22"><rect x="1" y="5.500" width="14" height="10.500" rx="2.200" fill="none" stroke="#e02828" stroke-width="1.250"/><path d="M15 9.300 L20.500 6.300 V15.300 L15 12.300" fill="none" stroke="#e02828" stroke-width="1.100"/><path d="M21 1.500 L1 20" stroke="#fff" stroke-width="3" fill="none"/><path d="M21 1.500 L1 20" stroke="#e02828" stroke-width="1.200" fill="none"/></svg>
<div class="av" style="top:89px;background:#16a085">任</div>
<div class="pn" style="top:96px">任（イム）ジェヒ</div>
<svg class="abs" style="left:318px;top:96px" width="22" height="22" viewBox="0 0 22 22"><rect x="8" y="2.800" width="6" height="10.500" rx="3" fill="none" stroke="#e02828" stroke-width="1.250"/><path d="M5.600 10.500 C5.600 17 16.400 17 16.400 10.500" fill="none" stroke="#e02828" stroke-width="1.100"/><path d="M11 15.500 V18.500 M8 19 H14" stroke="#e02828" stroke-width="1.100" fill="none"/><path d="M20.500 1 L1.500 20.500" stroke="#fff" stroke-width="3" fill="none"/><path d="M20.500 1 L1.500 20.500" stroke="#e02828" stroke-width="1.200" fill="none"/></svg>
<svg class="abs" style="left:349px;top:96px;margin-left:-0.700px" width="22" height="22" viewBox="0 0 22 22"><rect x="1" y="5.500" width="14" height="10.500" rx="2.200" fill="none" stroke="#e02828" stroke-width="1.250"/><path d="M15 9.300 L20.500 6.300 V15.300 L15 12.300" fill="none" stroke="#e02828" stroke-width="1.100"/><path d="M21 1.500 L1 20" stroke="#fff" stroke-width="3" fill="none"/><path d="M21 1.500 L1 20" stroke="#e02828" stroke-width="1.200" fill="none"/></svg>
<div class="av" style="top:140px;background:#34495e">趙</div>
<div class="pn" style="top:147px">趙宣映</div>
<svg class="abs" style="left:318px;top:147px" width="22" height="22" viewBox="0 0 22 22"><rect x="8" y="2.800" width="6" height="10.500" rx="3" fill="none" stroke="#e02828" stroke-width="1.250"/><path d="M5.600 10.500 C5.600 17 16.400 17 16.400 10.500" fill="none" stroke="#e02828" stroke-width="1.100"/><path d="M11 15.500 V18.500 M8 19 H14" stroke="#e02828" stroke-width="1.100" fill="none"/><path d="M20.500 1 L1.500 20.500" stroke="#fff" stroke-width="3" fill="none"/><path d="M20.500 1 L1.500 20.500" stroke="#e02828" stroke-width="1.200" fill="none"/></svg>
<svg class="abs" style="left:349px;top:147px;margin-left:-0.700px" width="22" height="22" viewBox="0 0 22 22"><rect x="1" y="5.500" width="14" height="10.500" rx="2.200" fill="none" stroke="#e02828" stroke-width="1.250"/><path d="M15 9.300 L20.500 6.300 V15.300 L15 12.300" fill="none" stroke="#e02828" stroke-width="1.100"/><path d="M21 1.500 L1 20" stroke="#fff" stroke-width="3" fill="none"/><path d="M21 1.500 L1 20" stroke="#e02828" stroke-width="1.200" fill="none"/></svg>
<div class="av" style="top:191px;background:#2980b9">湯</div>
<div class="pn" style="top:198px">湯浅千映子（大阪観光大学）</div>
<svg class="abs" style="left:318px;top:198px" width="22" height="22" viewBox="0 0 22 22"><rect x="8" y="2.800" width="6" height="10.500" rx="3" fill="none" stroke="#e02828" stroke-width="1.250"/><path d="M5.600 10.500 C5.600 17 16.400 17 16.400 10.500" fill="none" stroke="#e02828" stroke-width="1.100"/><path d="M11 15.500 V18.500 M8 19 H14" stroke="#e02828" stroke-width="1.100" fill="none"/><path d="M20.500 1 L1.500 20.500" stroke="#fff" stroke-width="3" fill="none"/><path d="M20.500 1 L1.500 20.500" stroke="#e02828" stroke-width="1.200" fill="none"/></svg>
<svg class="abs" style="left:349px;top:198px;margin-left:-0.700px" width="22" height="22" viewBox="0 0 22 22"><rect x="1" y="5.500" width="14" height="10.500" rx="2.200" fill="none" stroke="#e02828" stroke-width="1.250"/><path d="M15 9.300 L20.500 6.300 V15.300 L15 12.300" fill="none" stroke="#e02828" stroke-width="1.100"/><path d="M21 1.500 L1 20" stroke="#fff" stroke-width="3" fill="none"/><path d="M21 1.500 L1 20" stroke="#e02828" stroke-width="1.200" fill="none"/></svg>
<svg class="abs" style="left:24px;top:242px" width="33" height="33" viewBox="0 0 33 33"><defs><linearGradient id="pg" x1="0" y1="0" x2="0" y2="1"><stop offset="0" stop-color="#ee8f38"/><stop offset="0.55" stop-color="#f3a040"/><stop offset="0.8" stop-color="#f4a648"/><stop offset="1" stop-color="#fbd272"/></linearGradient><clipPath id="pc"><rect width="33" height="33" rx="8.500"/></clipPath></defs><g clip-path="url(#pc)"><rect width="33" height="33" fill="url(#pg)"/><path d="M21.500 5.800 L33 7.500 V17.500 H22.400Z" fill="#7a3f2a"/><path d="M23 9 L33 10 M23 12.500 L33 13 M23 15.500 L33 15.500" stroke="#3a2620" stroke-width="1.100"/><path d="M14.400 1.800 H23.300 L25 5.800 L21.800 17.500 Z" fill="#0f2a2e"/><path d="M16.200 8 L14.600 18.200" stroke="#1a2a28" stroke-width="0.9"/><rect x="4.700" y="18.200" width="29" height="6.300" fill="#08262c"/><path d="M4.700 24.400 H26 L24 25.600 H5Z" fill="#0a1a1c"/><rect x="8.700" y="24.400" width="1.800" height="9" fill="#1c1a18"/><rect x="12.200" y="24.400" width="2" height="9" fill="#1c1a18"/><rect x="16.200" y="24.400" width="2" height="9" fill="#2a1c14"/><ellipse cx="2.200" cy="15" rx="2" ry="1.500" fill="#4a3020"/><ellipse cx="2.400" cy="16.800" rx="1.400" ry="1.400" fill="#e8b88a"/><path d="M0 18.500 C3 17.800 5 19 5 22 L5.500 27 C6 29 4 31 0 31Z" fill="#f6f2ea"/><path d="M4 29 L7.500 27.500 L8 31 L4.500 32Z" fill="#c84a20"/></g></svg>
<div class="pn" style="top:249px">討論 國生和美(弘報理事)</div>
<svg class="abs" style="left:318px;top:249px" width="22" height="22" viewBox="0 0 22 22"><rect x="8" y="2.800" width="6" height="10.500" rx="3" fill="none" stroke="#e02828" stroke-width="1.250"/><path d="M5.600 10.500 C5.600 17 16.400 17 16.400 10.500" fill="none" stroke="#e02828" stroke-width="1.100"/><path d="M11 15.500 V18.500 M8 19 H14" stroke="#e02828" stroke-width="1.100" fill="none"/><path d="M20.500 1 L1.500 20.500" stroke="#fff" stroke-width="3" fill="none"/><path d="M20.500 1 L1.500 20.500" stroke="#e02828" stroke-width="1.200" fill="none"/></svg>
<svg class="abs" style="left:349px;top:249px" width="22" height="22" viewBox="0 0 22 22"><rect x="1" y="5.500" width="14" height="10.500" rx="2.500" fill="none" stroke="#74748a" stroke-width="1.200"/><path d="M15 9.300 L20.500 6.300 V15.300 L15 12.300" fill="none" stroke="#74748a" stroke-width="1.200"/></svg>
<div class="av" style="top:293px;background:#f39c12">会</div>
<div class="pn" style="top:300px">会長 黄永熙(ふぁんよんひ)</div>
<svg class="abs" style="left:318px;top:300px" width="22" height="22" viewBox="0 0 22 22"><rect x="8" y="2.800" width="6" height="10.500" rx="3" fill="none" stroke="#e02828" stroke-width="1.250"/><path d="M5.600 10.500 C5.600 17 16.400 17 16.400 10.500" fill="none" stroke="#e02828" stroke-width="1.100"/><path d="M11 15.500 V18.500 M8 19 H14" stroke="#e02828" stroke-width="1.100" fill="none"/><path d="M20.500 1 L1.500 20.500" stroke="#fff" stroke-width="3" fill="none"/><path d="M20.500 1 L1.500 20.500" stroke="#e02828" stroke-width="1.200" fill="none"/></svg>
<svg class="abs" style="left:349px;top:300px;margin-left:-0.700px" width="22" height="22" viewBox="0 0 22 22"><rect x="1" y="5.500" width="14" height="10.500" rx="2.200" fill="none" stroke="#e02828" stroke-width="1.250"/><path d="M15 9.300 L20.500 6.300 V15.300 L15 12.300" fill="none" stroke="#e02828" stroke-width="1.100"/><path d="M21 1.500 L1 20" stroke="#fff" stroke-width="3" fill="none"/><path d="M21 1.500 L1 20" stroke="#e02828" stroke-width="1.200" fill="none"/></svg>
</div>
<div class="abs" style="left:24px;top:55px;width:355px;height:40px;border:1px solid #b9b9cc;border-radius:9px;background:#fff"></div>
<svg class="abs" style="left:38px;top:67px" width="16" height="16" viewBox="0 0 16 16"><circle cx="6.800" cy="6.800" r="5.300" fill="none" stroke="#7a7a8a" stroke-width="1.400"/><path d="M10.800 10.800 L15 15" stroke="#7a7a8a" stroke-width="1.500"/></svg>
<div class="abs nw" style="left:59px;top:63px;font-size:16px;line-height:24px;color:#777;letter-spacing:.9px">참가자 찾기</div>
<!-- list scrollbar -->
<div class="abs" style="left:387px;top:97px;width:10px;height:335px;border-radius:5px;background:#f3f3f8"></div>
<div class="abs" style="left:387px;top:354px;width:10px;height:77px;border-radius:5px;background:#adadb8"></div>
<div class="pb" style="left:39px;width:49px">초대</div>
<div class="pb" style="left:126px;width:132px">나만 음소거 해제</div>
<div class="pb" style="left:296px;width:64px">손들기</div>
<div class="abs" style="left:26px;top:500px;width:374px;height:1px;background:#ececf0"></div>
<svg class="abs" style="left:24px;top:525px" width="12" height="8" viewBox="0 0 12 8"><path d="M1.200 1.200 L6 6 L10.800 1.200" fill="none" stroke="#6a6a82" stroke-width="1.900" stroke-linecap="round" stroke-linejoin="round"/></svg>
<div class="hd" style="top:517px">Zoom 그룹 채팅</div>
<!-- chat -->
<div class="abs" style="left:92px;top:557px;width:234px;height:1px;background:#1467d8"></div>
<div class="ch" style="top:565px"><span class="k">제3발표장 : </span><span class="lk">https://us02web.zoom.us/j/83572511608</span></div>
<div class="ch" style="top:590px"><span class="k">제4발표장 : </span><span class="lk">https://us02web.zoom.us/j/89639085713</span></div>
<div class="ch" style="top:614px"><span class="k" style="letter-spacing:.14px">메인센터(개회식, 기조강연, 폐회) 및 제5발표장 :</span></div>
<div class="ch" style="top:636px"><span class="lk">https://us02web.zoom.us/j/83518542357</span></div>
<div class="ch" style="top:657px;font-size:14px"><span class="lk">https://docs.google.com/spreadsheets/d/1kUI-</span></div>
<div class="ch" style="top:682px;font-size:14px;letter-spacing:-0.290px"><span class="lk">Y5J1Ss0pCU3AKFch77Cvm091lroLefjjVZH5prU/edit?</span></div>
<div class="ch" style="top:707px;font-size:14px"><span class="lk">usp=sharing</span></div>
<div class="ch" style="top:741px;font-size:12px;color:#747487;letter-spacing:.23px">발신자<span style="color:#1467d8">司會 金玄珠 Hanbat National Univ.</span>수신자<span style="color:#1467d8">모두</span>:</div>
<div class="ch j" style="top:762px;font-size:14px;color:#4a4a4a">↓↓↓こちらのグーグルフォームにご質問、ご意見、コ</div>
<div class="ch j" style="top:787px;font-size:14px;color:#4a4a4a">メント等を書いていただければ幸いで</div>
<div class="ch j" style="top:813px;font-size:14px;color:#4a4a4a">す。<span class="lk" style="font-size:13px">https://docs.google.com/spreadsheets/d/1kUI-</span></div>
<div class="ch" style="top:833px;font-size:12.500px;letter-spacing:-0.250px"><span class="lk">Y5J1Ss0pCU3AKFch77Cvm091lroLefjjVZH5prU/edit?</span></div>
<div class="ch" style="top:850px;font-size:12.500px"><span class="lk">usp=sharing</span></div>
<!-- chat scrollbar -->
<div class="abs" style="left:390px;top:556px;width:8px;height:326px;border-radius:4px;background:#f3f3f8"></div>
<div class="abs" style="left:390px;top:790px;width:8px;height:91px;border-radius:4px;background:#adadb8"></div>
<div class="abs" style="left:0;top:883px;width:400px;height:1px;background:#e6e6ee"></div>
<!-- compose -->
<div class="abs nw" style="left:21px;top:902px;font-size:15px;line-height:24px;color:#333;letter-spacing:.7px">받는 사람:</div>
<div class="abs" style="left:99px;top:900px;width:74px;height:29px;border-radius:8px;background:#f2f2f7"></div>
<div class="abs nw" style="left:114px;top:903px;font-size:15px;line-height:24px;color:#222">모두</div>
<svg class="abs" style="left:153px;top:911px" width="10" height="7" viewBox="0 0 10 7"><path d="M1 1.200 L5 5.200 L9 1.200" fill="none" stroke="#222" stroke-width="1.600"/></svg>
<svg class="abs" style="left:265px;top:903px" width="18" height="20" viewBox="0 0 18 20"><path d="M4 1 H10.500 L16.500 7 V16 Q16.500 19 13.500 19 H4 Q1 19 1 16 V4 Q1 1 4 1Z M10.500 1 V5 Q10.500 7 12.500 7 H16.500" fill="none" stroke="#333" stroke-width="1.400"/></svg>
<div class="abs nw" style="left:294px;top:902px;font-size:15px;line-height:24px;color:#222;letter-spacing:.5px">파일</div>
<div class="abs" style="left:351px;top:898px;width:30px;height:30px;border:1px solid #dedee8;border-radius:8px;background:#fff"></div>
<div class="abs" style="left:360px;top:912px;width:2px;height:2px;background:#555;box-shadow:5px 0 0 #555,10px 0 0 #555"></div>
<div class="abs" style="left:21px;top:936px;width:1px;height:16px;background:#111"></div>
<div class="abs nw" style="left:22px;top:933px;font-size:14px;line-height:24px;color:#8a8a96">여기에 메시지 입력...</div>
</div>
<style>
#taskbar{background:linear-gradient(90deg,#141414 0px,#161616 60px,#3d3d3d 490px,#474747 700px,#4a4a4a 1000px,#444 1200px,#3c3c3c 1450px,#343434 1580px,#242424 1720px,#181818 1830px,#141414 1920px)}
.ul{position:absolute;top:47px;height:3px;background:#76b9ed}
.ul2{position:absolute;top:47px;height:3px;background:#5b94c4}
.ti{position:absolute}
</style>
<div id="taskbar">
<svg class="abs" style="left:20px;top:15px" width="21" height="21" viewBox="0 0 21 21"><path d="M0 3 L9.200 1.700 V10 H0Z M10.200 1.550 L21 0 V10 H10.200Z M0 11 H9.200 V19.300 L0 18Z M10.200 11 H21 V21 L10.200 19.450Z" fill="#fff"/></svg>
<div class="abs" style="left:60px;top:0;width:430px;height:50px;background:#f2f2f2;border-bottom:1px solid #c8c8c8;border-top:1px solid #e8e8e8"></div>
<svg class="abs" style="left:75px;top:14px" width="22" height="22" viewBox="0 0 22 22"><circle cx="13" cy="8.500" r="6.300" fill="none" stroke="#111" stroke-width="1.500"/><path d="M8.500 13 L1 20.500" stroke="#111" stroke-width="1.600"/></svg>
<div class="abs nw" style="left:111.500px;top:12px;font-size:18px;line-height:26px;color:#222;letter-spacing:2.050px">검색하려면 여기에 입력하십시오.</div>
<div class="ul" style="left:499px;width:51px"></div>
<div class="ul" style="left:561px;width:40px"></div>
<div class="ul2" style="left:601px;width:11px"></div>
<div class="ul" style="left:809px;width:40px"></div>
<div class="ul2" style="left:849px;width:11px"></div>
<div class="ul" style="left:871px;width:40px"></div>
<div class="ul2" style="left:911px;width:11px"></div>
<div class="ul" style="left:933px;width:40px"></div>
<div class="ul2" style="left:973px;width:11px"></div>
<div class="ul" style="left:1057px;width:51px"></div>
<div class="ul" style="left:1119px;width:51px"></div>
<div class="abs" style="left:990px;top:0;width:57px;height:50px;background:#6b6b6b"></div><div class="abs" style="left:1047px;top:0;width:4px;height:50px;background:#585858"></div>
<div class="ul" style="left:990px;width:57px"></div><div class="ul2" style="left:1047px;width:4px"></div>
<svg class="ti" style="left:509px;top:10px" width="30" height="30" viewBox="0 0 30 30"><path d="M1 3.500 Q1 2.500 2 2.500 H11 L13.500 5 H28 Q29 5 29 6 V25 H1Z" fill="#e9a81c"/><rect x="1" y="6.500" width="28" height="19.500" rx="1" fill="#fbd15a"/><path d="M7 26 V17 Q7 16 8 16 H22 Q23 16 23 17 V26 H19.500 V20 H10.500 V26Z" fill="#3b8fdc"/></svg>
<svg class="ti" style="left:571px;top:10px" width="30" height="30" viewBox="0 0 30 30"><g transform="translate(15 15.500) scale(1.180) translate(-15 -15.500)"><path d="M15 6.500 A9.500 9.500 0 1 0 24 19 H18.500 A4.600 4.600 0 0 1 10.800 17.500 H24.600 A9.500 9.500 0 0 0 15 6.500Z M10.800 14.200 A4.400 4.400 0 0 1 19.200 14.200Z" fill="#35b6f3" fill-rule="evenodd"/><path d="M15 6.500 A9.500 9.500 0 0 1 24.600 17.500 H10.800 L10.800 14.200 H19.200 A4.400 4.400 0 0 0 15 11Z" fill="#5cc8f8" opacity="0.6"/><path d="M3.500 25.500 C0 22 6 11 16 5.500 C22 2.300 27.500 2.500 28 5.500 C28.300 7.500 27.300 9.500 26 11.500" fill="none" stroke="#f5c518" stroke-width="2"/><path d="M3.500 25.500 C5 27 8.500 26.500 12 24.500" fill="none" stroke="#f5c518" stroke-width="2"/></g></svg>
<svg class="ti" style="left:633px;top:10px" width="30" height="30" viewBox="0 0 30 30"><circle cx="15" cy="15" r="14" fill="#db4437"/><path d="M15 15 L2.900 8 A14 14 0 0 0 15 29 L21 18.500Z" fill="#1da462"/><path d="M15 15 L21.100 18.500 L15 29 A14 14 0 0 0 27.100 8 H15Z" fill="#ffcd40"/><circle cx="15" cy="15" r="6.400" fill="#f1f1f1"/><circle cx="15" cy="15" r="5.100" fill="#4a8af4"/></svg>
<svg class="ti" style="left:694px;top:10px" width="30" height="30" viewBox="0 0 30 30"><rect x="2" y="1.500" width="25" height="26" rx="2" fill="#3c9a4a"/><rect x="2" y="1.500" width="25" height="9" rx="2" fill="#7cc486" opacity="0.8"/><text x="11" y="21" text-anchor="middle" font-size="22" font-weight="bold" font-family="Liberation Sans,sans-serif" fill="#1e7a30">X</text><path d="M10 20 L27 17 L28.500 26 L11.500 29Z" fill="#f4faf4"/><path d="M13 22.500 L26 20.200 M13.600 25.500 L26.600 23.200" stroke="#5aac66" stroke-width="1.200"/></svg>
<svg class="ti" style="left:756px;top:10px" width="30" height="30" viewBox="0 0 30 30"><rect x="2" y="1.500" width="25" height="26" rx="2" fill="#3a6fc4"/><rect x="2" y="1.500" width="25" height="9" rx="2" fill="#8fb4ea" opacity="0.8"/><text x="13" y="21" text-anchor="middle" font-size="20" font-weight="bold" font-family="Liberation Sans,sans-serif" fill="#153f9a">W</text><path d="M12 21 L27 16 L28.500 24 L13.500 29Z" fill="#f4f7fc"/></svg>
<svg class="ti" style="left:818px;top:10px" width="30" height="30" viewBox="0 0 30 30"><rect x="2" y="1.500" width="25" height="26" rx="2" fill="#e8693a"/><rect x="2" y="1.500" width="25" height="9" rx="2" fill="#f8c4a4" opacity="0.850"/><text x="11" y="20" text-anchor="middle" font-size="21" font-weight="bold" font-family="Liberation Sans,sans-serif" fill="#c83c10">P</text><path d="M10 20 L27 15 L29 25 L12 29.500Z" fill="#fdf3ee"/><circle cx="20" cy="21" r="3.500" fill="#ef8a5c"/></svg>
<svg class="ti" style="left:881px;top:10px" width="30" height="30" viewBox="0 0 30 30"><rect x="0" y="0" width="30" height="30" rx="2" fill="#fae100"/><ellipse cx="15" cy="13.500" rx="12" ry="9.300" fill="#3c1e1e"/><path d="M9 20 L8 26 L14 21.500Z" fill="#3c1e1e"/><text x="15" y="17.200" text-anchor="middle" font-size="8.500" font-weight="bold" letter-spacing="-0.3" font-family="Liberation Sans,sans-serif" fill="#fae100">TALK</text></svg>
<svg class="ti" style="left:943px;top:10px" width="30" height="30" viewBox="0 0 30 30"><rect x="1" y="1" width="28" height="28" rx="4" fill="#f1f1f3"/><path d="M13 4 L27 6 V25 L13 27Z" fill="#3f9ad6"/><rect x="3.500" y="6.500" width="1.600" height="18" fill="#6ab2e0"/><rect x="6.500" y="6" width="1.600" height="19" fill="#6ab2e0"/><rect x="9.500" y="5.500" width="1.600" height="20" fill="#6ab2e0"/><text x="20.500" y="20" text-anchor="middle" font-size="11" font-family="Liberation Sans,Noto Sans CJK KR,sans-serif" fill="#eaf4fb">호</text></svg>
<svg class="ti" style="left:1005px;top:10px" width="30" height="30" viewBox="0 0 30 30"><defs><linearGradient id="zg2" x1="0" y1="0" x2="0" y2="1"><stop offset="0" stop-color="#4f9cff"/><stop offset="1" stop-color="#3d86f0"/></linearGradient></defs><rect x="1" y="1" width="28" height="28" rx="9" fill="url(#zg2)"/><rect x="6" y="10" width="13" height="10" rx="2.500" fill="#fff"/><path d="M20 13.500 L24.500 10.500 V19.500 L20 16.500Z" fill="#fff"/></svg>
<svg class="ti" style="left:1067px;top:10px" width="30" height="30" viewBox="0 0 30 30"><defs><linearGradient id="eg" x1="0" y1="1" x2="1" y2="0"><stop offset="0" stop-color="#0c59a4"/><stop offset="0.5" stop-color="#1b9de2"/><stop offset="1" stop-color="#5fd75c"/></linearGradient></defs><circle cx="15" cy="15" r="14.500" fill="url(#eg)"/><path d="M2 19 C3 12 9 8.500 15 9.500 C21 10.500 24 14 23 18 C22 21 18 21 17 19 C18 17 17 14.500 14.500 14.500 C10 14.500 8.500 20 11 24.500 C13 28 17 29.500 20 29 C11 32 3 27 2 19Z" fill="#0d4f9a"/><path d="M17 19 C18 21 22 21 23 18 C23.500 16.500 23 15 22.500 14 C26 15 28 17 29 19.500 C27 22.500 21 24 17 19Z" fill="#4a4a4a"/></svg>
<svg class="ti" style="left:1129px;top:10px" width="30" height="30" viewBox="0 0 30 30"><defs><linearGradient id="pg2" x1="0" y1="0" x2="0" y2="1"><stop offset="0" stop-color="#1fa6ea"/><stop offset="1" stop-color="#2f7fe0"/></linearGradient></defs><rect x="1" y="1.500" width="28" height="27" rx="1.500" fill="url(#pg2)"/><circle cx="19.500" cy="7.500" r="2.600" fill="#f4f8fd"/><path d="M1 28.500 V20 L10 11 L22 24 L29 28.500Z" fill="#163f88"/><path d="M14 28.500 L23 17 L29 23 V28.500Z" fill="#5a6fd0" opacity="0.850"/><path d="M1 28.500 V22 L10 13 L25 28.500Z" fill="#12356f"/></svg>
<svg class="abs" style="left:1575px;top:19px" width="18" height="11" viewBox="0 0 18 11"><path d="M1 10 L9 2 L17 10" fill="none" stroke="#fff" stroke-width="1.200"/></svg>
<svg class="abs" style="left:1603px;top:17px" width="22" height="15" viewBox="0 0 22 15"><rect x="4.500" y="4.500" width="15.500" height="8.500" fill="none" stroke="#fff" stroke-width="1"/><rect x="6" y="6" width="12.500" height="5.500" fill="#fff"/><rect x="20" y="7" width="1.500" height="3.500" fill="#fff"/><path d="M1.500 0.500 V3 M4.500 0.500 V3 M0.500 3 H5.500 V6 Q5.500 7.500 3 7.500 V10" fill="none" stroke="#fff" stroke-width="1"/></svg>
<svg class="abs" style="left:1633px;top:16px" width="22" height="18" viewBox="0 0 22 18"><rect x="3.500" y="1.500" width="17" height="11.500" fill="none" stroke="#fff" stroke-width="1"/><path d="M12 13 V16 M7.500 16.500 H16.500" stroke="#fff" stroke-width="1" fill="none"/><rect x="0.500" y="3.500" width="4.500" height="5.500" fill="#2e2e2e" stroke="#fff" stroke-width="1"/><path d="M2.800 9 V16.500 H7" fill="none" stroke="#fff" stroke-width="1"/></svg>
<svg class="abs" style="left:1663px;top:15px" width="22" height="20" viewBox="0 0 22 20"><path d="M1.500 7 H5 L9.500 2.500 V17.500 L5 13 H1.500Z" fill="none" stroke="#fff" stroke-width="1"/><path d="M12 7 Q14 10 12 13 M14.500 4.500 Q18 10 14.500 15.500 M17.200 2 Q22 10 17.200 18" fill="none" stroke="#fff" stroke-width="1"/></svg>
<div class="abs nw" style="left:1694px;top:12.500px;font-size:18.500px;line-height:26px;color:#fff;font-weight:300">가</div>
<div class="abs nw" style="left:1730px;top:16px;width:18px;height:18px;background:#fff;color:#000;font-size:15px;line-height:18px;text-align:center;font-weight:500">한</div>
<div class="abs nw" style="left:1748px;top:3px;width:120px;text-align:center;font-size:15px;line-height:22px;color:#fff;letter-spacing:-0.2px">오후 5:40</div>
<div class="abs nw" style="left:1748px;top:26px;width:120px;text-align:center;font-size:15px;line-height:22px;color:#fff;letter-spacing:-0.2px">2020-09-19</div>
<svg class="abs" style="left:1869px;top:14px" width="30" height="32" viewBox="0 0 30 32"><path d="M1 1 H20 V15 H10 L10 19 L6 15 H1Z" fill="#fff"/><path d="M4.500 5 H16.500 M4.500 8 H16.500 M4.500 11 H16.500" stroke="#222" stroke-width="1"/><circle cx="19" cy="21" r="9.500" fill="#1c1c1c" stroke="#777" stroke-width="1"/><text x="19" y="26" text-anchor="middle" font-size="14" font-weight="bold" font-family="Liberation Sans,sans-serif" fill="#fff">6</text></svg>
<div class="abs" style="left:1914px;top:0;width:1px;height:50px;background:#555"></div>
</div>
</body>
</html>
